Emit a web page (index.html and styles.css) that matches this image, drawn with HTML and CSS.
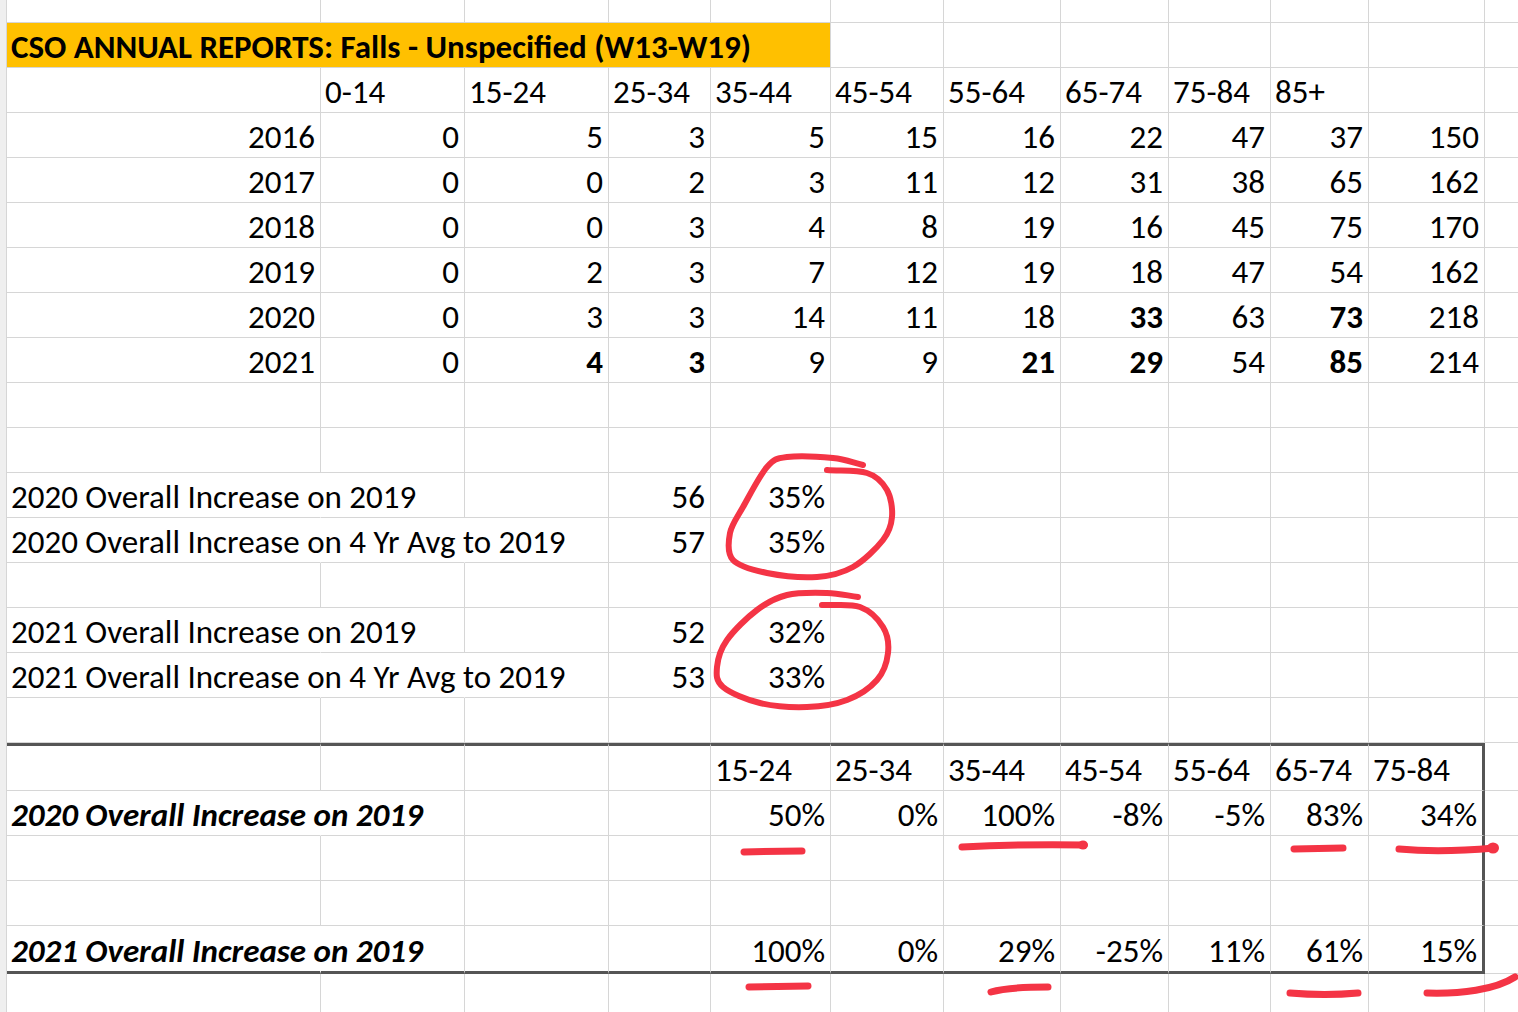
FILE: index.html
```html
<!DOCTYPE html>
<html>
<head>
<meta charset="utf-8">
<title>CSO Annual Reports</title>
<link rel="stylesheet" href="styles.css">
</head>
<body>
<div class="sheet">
  <div class="row row0">
    <div class="c"></div><div class="c"></div><div class="c"></div><div class="c"></div><div class="c"></div><div class="c"></div><div class="c"></div><div class="c"></div><div class="c"></div><div class="c"></div><div class="c"></div><div class="c"></div>
  </div>
  <div class="row">
    <div class="c title">CSO ANNUAL REPORTS: Falls - Unspecified (W13-W19)</div>
    <div class="c"></div><div class="c"></div><div class="c"></div><div class="c"></div><div class="c"></div><div class="c"></div><div class="c"></div>
  </div>
  <div class="row">
    <div class="c"></div><div class="c">0-14</div><div class="c">15-24</div><div class="c">25-34</div><div class="c">35-44</div><div class="c">45-54</div><div class="c">55-64</div><div class="c">65-74</div><div class="c">75-84</div><div class="c">85+</div><div class="c"></div><div class="c"></div>
  </div>
  <div class="row">
    <div class="c r">2016</div><div class="c r">0</div><div class="c r">5</div><div class="c r">3</div><div class="c r">5</div><div class="c r">15</div><div class="c r">16</div><div class="c r">22</div><div class="c r">47</div><div class="c r">37</div><div class="c r">150</div><div class="c"></div>
  </div>
  <div class="row">
    <div class="c r">2017</div><div class="c r">0</div><div class="c r">0</div><div class="c r">2</div><div class="c r">3</div><div class="c r">11</div><div class="c r">12</div><div class="c r">31</div><div class="c r">38</div><div class="c r">65</div><div class="c r">162</div><div class="c"></div>
  </div>
  <div class="row">
    <div class="c r">2018</div><div class="c r">0</div><div class="c r">0</div><div class="c r">3</div><div class="c r">4</div><div class="c r">8</div><div class="c r">19</div><div class="c r">16</div><div class="c r">45</div><div class="c r">75</div><div class="c r">170</div><div class="c"></div>
  </div>
  <div class="row">
    <div class="c r">2019</div><div class="c r">0</div><div class="c r">2</div><div class="c r">3</div><div class="c r">7</div><div class="c r">12</div><div class="c r">19</div><div class="c r">18</div><div class="c r">47</div><div class="c r">54</div><div class="c r">162</div><div class="c"></div>
  </div>
  <div class="row">
    <div class="c r">2020</div><div class="c r">0</div><div class="c r">3</div><div class="c r">3</div><div class="c r">14</div><div class="c r">11</div><div class="c r">18</div><div class="c r b">33</div><div class="c r">63</div><div class="c r b">73</div><div class="c r">218</div><div class="c"></div>
  </div>
  <div class="row">
    <div class="c r">2021</div><div class="c r">0</div><div class="c r b">4</div><div class="c r b">3</div><div class="c r">9</div><div class="c r">9</div><div class="c r b">21</div><div class="c r b">29</div><div class="c r">54</div><div class="c r b">85</div><div class="c r">214</div><div class="c"></div>
  </div>
  <div class="row">
    <div class="c"></div><div class="c"></div><div class="c"></div><div class="c"></div><div class="c"></div><div class="c"></div><div class="c"></div><div class="c"></div><div class="c"></div><div class="c"></div><div class="c"></div><div class="c"></div>
  </div>
  <div class="row">
    <div class="c"></div><div class="c"></div><div class="c"></div><div class="c"></div><div class="c"></div><div class="c"></div><div class="c"></div><div class="c"></div><div class="c"></div><div class="c"></div><div class="c"></div><div class="c"></div>
  </div>
  <div class="row">
    <div class="c nr">2020 Overall Increase on 2019</div><div class="c"></div><div class="c"></div><div class="c r">56</div><div class="c r">35%</div><div class="c"></div><div class="c"></div><div class="c"></div><div class="c"></div><div class="c"></div><div class="c"></div><div class="c"></div>
  </div>
  <div class="row">
    <div class="c nr">2020 Overall Increase on 4 Yr Avg to 2019</div><div class="c nr"></div><div class="c"></div><div class="c r">57</div><div class="c r">35%</div><div class="c"></div><div class="c"></div><div class="c"></div><div class="c"></div><div class="c"></div><div class="c"></div><div class="c"></div>
  </div>
  <div class="row">
    <div class="c"></div><div class="c"></div><div class="c"></div><div class="c"></div><div class="c"></div><div class="c"></div><div class="c"></div><div class="c"></div><div class="c"></div><div class="c"></div><div class="c"></div><div class="c"></div>
  </div>
  <div class="row">
    <div class="c nr">2021 Overall Increase on 2019</div><div class="c"></div><div class="c"></div><div class="c r">52</div><div class="c r">32%</div><div class="c"></div><div class="c"></div><div class="c"></div><div class="c"></div><div class="c"></div><div class="c"></div><div class="c"></div>
  </div>
  <div class="row">
    <div class="c nr">2021 Overall Increase on 4 Yr Avg to 2019</div><div class="c nr"></div><div class="c"></div><div class="c r">53</div><div class="c r">33%</div><div class="c"></div><div class="c"></div><div class="c"></div><div class="c"></div><div class="c"></div><div class="c"></div><div class="c"></div>
  </div>
  <div class="row">
    <div class="c"></div><div class="c"></div><div class="c"></div><div class="c"></div><div class="c"></div><div class="c"></div><div class="c"></div><div class="c"></div><div class="c"></div><div class="c"></div><div class="c"></div><div class="c"></div>
  </div>
  <div class="row tall">
    <div class="c bt"></div><div class="c bt"></div><div class="c bt"></div><div class="c bt"></div><div class="c bt">15-24</div><div class="c bt">25-34</div><div class="c bt">35-44</div><div class="c bt">45-54</div><div class="c bt">55-64</div><div class="c bt">65-74</div><div class="c bt br">75-84</div><div class="c"></div>
  </div>
  <div class="row">
    <div class="c nr bi">2020 Overall Increase on 2019</div><div class="c"></div><div class="c"></div><div class="c"></div><div class="c r">50%</div><div class="c r">0%</div><div class="c r">100%</div><div class="c r">-8%</div><div class="c r">-5%</div><div class="c r">83%</div><div class="c r br">34%</div><div class="c"></div>
  </div>
  <div class="row">
    <div class="c"></div><div class="c"></div><div class="c"></div><div class="c"></div><div class="c"></div><div class="c"></div><div class="c"></div><div class="c"></div><div class="c"></div><div class="c"></div><div class="c br"></div><div class="c"></div>
  </div>
  <div class="row">
    <div class="c"></div><div class="c"></div><div class="c"></div><div class="c"></div><div class="c"></div><div class="c"></div><div class="c"></div><div class="c"></div><div class="c"></div><div class="c"></div><div class="c br"></div><div class="c"></div>
  </div>
  <div class="row tall">
    <div class="c nr bi bb">2021 Overall Increase on 2019</div><div class="c bb"></div><div class="c bb"></div><div class="c bb"></div><div class="c r bb">100%</div><div class="c r bb">0%</div><div class="c r bb">29%</div><div class="c r bb">-25%</div><div class="c r bb">11%</div><div class="c r bb">61%</div><div class="c r bb br">15%</div><div class="c"></div>
  </div>
  <div class="row">
    <div class="c"></div><div class="c"></div><div class="c"></div><div class="c"></div><div class="c"></div><div class="c"></div><div class="c"></div><div class="c"></div><div class="c"></div><div class="c"></div><div class="c"></div><div class="c"></div>
  </div>

  <svg class="ink" width="1518" height="1012" viewBox="0 0 1518 1012">
    <g fill="none" stroke="#f43445" stroke-linecap="round" stroke-linejoin="round">
      <path stroke-width="6" d="M 827 470 C 840 471, 857 470, 867 473 S 883 483, 887 490 S 892.7 508.7, 892 517 S 889.5 531.7, 883 540 S 864 560.8, 853 567 S 831.3 576, 817 577 S 781 575.8, 767 573 S 739.2 566.7, 733 560 S 728.3 541.8, 730 533 S 736.8 518, 743 507 S 759.7 475.3, 767 467 S 776 458.5, 787 457 S 820.3 456.7, 833 458 S 853 462.7, 863 465"/>
      <path stroke-width="6" d="M 822 605 C 834.7 605.7, 849.8 603.3, 860 607 S 878.3 619.3, 883 627 S 889 644.2, 888 653 S 883.8 672.2, 877 680 S 858.7 695.5, 847 700 S 821.5 706.5, 807 707 S 774 706.3, 760 703 S 730.2 693, 723 687 S 716.3 674.8, 717 667 S 720.3 649.5, 727 640 S 747 617.5, 757 610 S 775.3 597.8, 787 595 S 815.2 592.7, 827 593 S 847.7 595.7, 858 597"/>
      <path stroke-width="7" d="M 744 852 Q 773 851 802 851"/>
      <path stroke-width="7" d="M 962 847 Q 1020 844 1084 845"/>
      <path stroke-width="7" d="M 1294 849 L 1343 848"/>
      <path stroke-width="7" d="M 1399 849 Q 1440 853 1494 848"/>
      <path stroke-width="7" d="M 749 987 L 808 986"/>
      <path stroke-width="7" d="M 991 992 Q 1008 987 1048 987"/>
      <path stroke-width="7" d="M 1290 993 Q 1325 996 1358 993"/>
      <path stroke-width="7" d="M 1427 993 C 1460 994, 1495 990, 1515 977"/>
    </g>
    <g fill="#f43445">
      <ellipse cx="1083" cy="845" rx="5" ry="4.5"/>
      <ellipse cx="1493" cy="848" rx="6" ry="5.5"/>
    </g>
  </svg>
</div>
</body>
</html>
```

FILE: styles.css
```css
html, body {
  margin: 0;
  padding: 0;
  background: #ffffff;
}

.sheet {
  position: relative;
  width: 1512px;
  height: 1012px;
  overflow: hidden;
  border-left: 6px solid #efefef;
  font-family: Carlito, "Liberation Sans", sans-serif;
  font-size: 33px;
  color: #000;
}

.row {
  display: grid;
  grid-template-columns: 314px 144px 144px 102px 120px 113px 117px 108px 102px 98px 116px 160px;
  height: 45px;
  border-left: 1px solid #d6d6d6;
}

.row0 {
  height: 23px;
}

.tall {
  height: 48px;
}

.c {
  box-sizing: border-box;
  border-right: 1px solid #d6d6d6;
  border-bottom: 1px solid #d6d6d6;
  display: flex;
  align-items: flex-end;
  padding: 0 5px 3px 4px;
  white-space: nowrap;
  line-height: 1;
  min-width: 0;
}

.r {
  justify-content: flex-end;
}

.nr {
  border-right-color: transparent;
}

.b {
  font-weight: 700;
}

.bi {
  font-weight: 700;
  font-style: italic;
}

.title {
  grid-column: span 5;
  background: #ffc000;
  font-weight: 700;
}

.bt {
  border-top: 3px solid #555555;
}

.bb {
  border-bottom: 3px solid #555555;
}

.br {
  border-right: 3px solid #555555;
}

.ink {
  position: absolute;
  top: 0;
  left: -6px;
  pointer-events: none;
}
```
